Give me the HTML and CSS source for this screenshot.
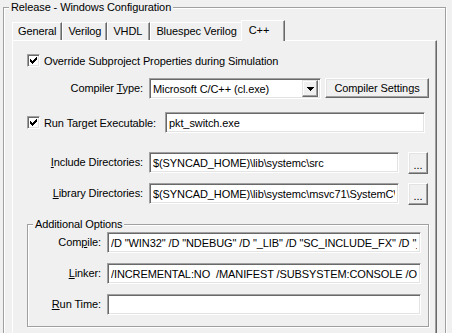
FILE: index.html
```html
<!DOCTYPE html>
<html>
<head>
  <title>Release - Windows Configuration</title>
  <link rel="stylesheet" href="styles.css">
</head>

<body>
  <fieldset class="config">
    <legend>Release - Windows Configuration</legend>

    <div class="tabs">
      <div class="tab-strip">
        <span class="tab">General</span>
        <span class="tab">Verilog</span>
        <span class="tab">VHDL</span>
        <span class="tab">Bluespec Verilog</span>
        <span class="tab active">C++</span>
      </div>

      <div class="tab-panel">
        <div class="row row-override">
          <span class="checkbox">
            <svg width="13" height="13" viewBox="0 0 13 13" shape-rendering="crispEdges">
              <polygon points="3,5 5,7 10,2 10,5 5,10 3,8" fill="#000"/>
            </svg>
          </span>
          <span class="check-text">Override Subproject Properties during Simulation</span>
        </div>

        <div class="row row-type">
          <label class="field-label">Compiler <u>T</u>ype:</label>
          <div class="select">
            <span class="select-text">Microsoft C/C++ (cl.exe)</span>
            <span class="select-btn">
              <svg width="7" height="4" viewBox="0 0 7 4" shape-rendering="crispEdges">
                <polygon points="0,0 7,0 3.5,4" fill="#000"/>
              </svg>
            </span>
          </div>
          <button class="btn btn-settings">Compiler Settin<u>g</u>s</button>
        </div>

        <div class="row row-run">
          <label class="check-label">
            <span class="checkbox">
              <svg width="13" height="13" viewBox="0 0 13 13" shape-rendering="crispEdges">
                <polygon points="3,5 5,7 10,2 10,5 5,10 3,8" fill="#000"/>
              </svg>
            </span>
            <span class="check-text">Run Target Executable:</span>
          </label>
          <input class="field field-run" type="text" value="pkt_switch.exe">
        </div>

        <div class="row row-include">
          <label class="field-label"><u>I</u>nclude Directories:</label>
          <input class="field field-dir" type="text" value="$(SYNCAD_HOME)\lib\systemc\src">
          <button class="btn btn-browse">...</button>
        </div>

        <div class="row row-library">
          <label class="field-label"><u>L</u>ibrary Directories:</label>
          <input class="field field-dir" type="text" value="$(SYNCAD_HOME)\lib\systemc\msvc71\SystemC\Release">
          <button class="btn btn-browse">...</button>
        </div>

        <fieldset class="options">
          <legend>Additional Options</legend>
          <div class="option-row">
            <label class="option-label">Com<u>p</u>ile:</label>
            <input class="field field-option" type="text" value='/D "WIN32" /D "NDEBUG" /D "_LIB" /D "SC_INCLUDE_FX" /D "_CONSOLE" /EHsc /MD'>
          </div>
          <div class="option-row">
            <label class="option-label"><u>L</u>inker:</label>
            <input class="field field-option" type="text" value="/INCREMENTAL:NO  /MANIFEST /SUBSYSTEM:CONSOLE /OPT:REF /OPT:ICF">
          </div>
          <div class="option-row">
            <label class="option-label"><u>R</u>un Time:</label>
            <input class="field field-option" type="text" value="">
          </div>
        </fieldset>
      </div>
    </div>
  </fieldset>
</body>
</html>
```

FILE: styles.css
```css
body {
  margin: 0;
  height: 333px;
  overflow: hidden;
  background-color: #f0f0f0;
  font-family: 'Liberation Sans', sans-serif;
  font-size: 11px;
  letter-spacing: -0.1px;
  color: #000;
}

/* Etched group boxes */
.config,
.options {
  box-sizing: border-box;
  margin: 0;
  padding: 0;
  min-inline-size: 0;
  border: 1px solid #a0a0a0;
  box-shadow: 1px 1px 0 #fff, inset 1px 1px 0 #fff;
}

.config {
  margin-left: 3px;
  width: 443px;
  height: 380px;
}

.config > legend,
.options > legend {
  margin-left: 5px;
  padding: 0 2px;
  line-height: 15px;
  background-color: #f0f0f0;
}

/* Tab control */
.tabs {
  margin: 5px 0 0 8px;
  width: 425px;
}

.tab-strip {
  display: flex;
  align-items: flex-end;
  height: 20px;
}

.tab {
  box-sizing: border-box;
  min-width: 43px;
  height: 18px;
  padding: 0 5px;
  line-height: 16px;
  border-top: 1px solid #fff;
  border-left: 1px solid #fff;
  border-right: 1px solid #696969;
  box-shadow: inset -1px 0 0 #a0a0a0;
  white-space: nowrap;
}

.tab.active {
  position: relative;
  z-index: 1;
  height: 21px;
  min-width: 44px;
  margin: 0 -2px -1px -2px;
  padding: 0 7px;
  line-height: 18px;
  background-color: #f0f0f0;
}

.tab-panel {
  box-sizing: border-box;
  height: 330px;
  padding: 9px 0 0 14px;
  border-top: 1px solid #fff;
  border-left: 1px solid #fff;
  border-right: 1px solid #696969;
  box-shadow: inset -1px 0 0 #a0a0a0;
}

/* Rows */
.row {
  display: flex;
  align-items: flex-start;
}

.row-override {
  height: 21px;
  align-items: center;
}

.row-type {
  margin-top: 7px;
}

.row-run {
  margin-top: 13px;
}

.row-include {
  margin-top: 19px;
}

.row-library {
  margin-top: 9px;
}

.field-label {
  width: 116px;
  margin-right: 6px;
  line-height: 21px;
  text-align: right;
  white-space: nowrap;
}

.check-label {
  display: flex;
  align-items: center;
  width: 132px;
  height: 21px;
  margin-right: 6px;
  white-space: nowrap;
}

.checkbox {
  display: block;
  box-sizing: border-box;
  width: 13px;
  height: 13px;
  margin-right: 4px;
  border: 1px solid;
  border-color: #a0a0a0 #fff #fff #a0a0a0;
  box-shadow: inset 1px 1px 0 #696969, inset -1px -1px 0 #e3e3e3;
  background-color: #fff;
  flex-shrink: 0;
}

.checkbox svg {
  display: block;
  margin: -1px;
}

/* Sunken edit boxes */
.field,
.select {
  box-sizing: border-box;
  height: 21px;
  margin: 0;
  padding: 0 3px;
  border: 1px solid;
  border-color: #a0a0a0 #fff #fff #a0a0a0;
  box-shadow: inset 1px 1px 0 #696969, inset -1px -1px 0 #e3e3e3;
  background-color: #fff;
  font-family: inherit;
  font-size: 11px;
  letter-spacing: -0.1px;
  color: #000;
  outline: none;
}

.field-run {
  width: 260px;
}

.field-dir {
  width: 250px;
}

.select {
  display: flex;
  align-items: center;
  width: 172px;
  padding: 2px 2px 2px 3px;
}

.select-text {
  flex: 1;
  white-space: nowrap;
}

.select-btn {
  box-sizing: border-box;
  display: flex;
  align-items: center;
  justify-content: center;
  width: 16px;
  height: 17px;
  border: 1px solid;
  border-color: #e3e3e3 #696969 #696969 #e3e3e3;
  box-shadow: inset -1px -1px 0 #a0a0a0, inset 1px 1px 0 #fff;
  background-color: #f0f0f0;
}

/* Raised push buttons */
.btn {
  box-sizing: border-box;
  margin: 0;
  padding: 0;
  border: 1px solid;
  border-color: #fff #696969 #696969 #fff;
  box-shadow: inset -1px -1px 0 #a0a0a0, inset 1px 1px 0 #e3e3e3;
  background-color: #f0f0f0;
  font-family: inherit;
  font-size: 11px;
  letter-spacing: -0.1px;
  color: #000;
}

.btn-settings {
  width: 104px;
  height: 20px;
  margin-left: 4px;
}

.btn-browse {
  width: 20px;
  height: 22px;
  margin-left: 9px;
  padding-top: 4px;
}

/* Additional options group */
.options {
  width: 402px;
  height: 110px;
  margin-top: 12px;
  padding-bottom: 10px;
}

.option-row {
  display: flex;
  margin-bottom: 10px;
}

.option-label {
  width: 73px;
  margin-right: 6px;
  line-height: 21px;
  text-align: right;
}

.field-option {
  width: 314px;
}
```
